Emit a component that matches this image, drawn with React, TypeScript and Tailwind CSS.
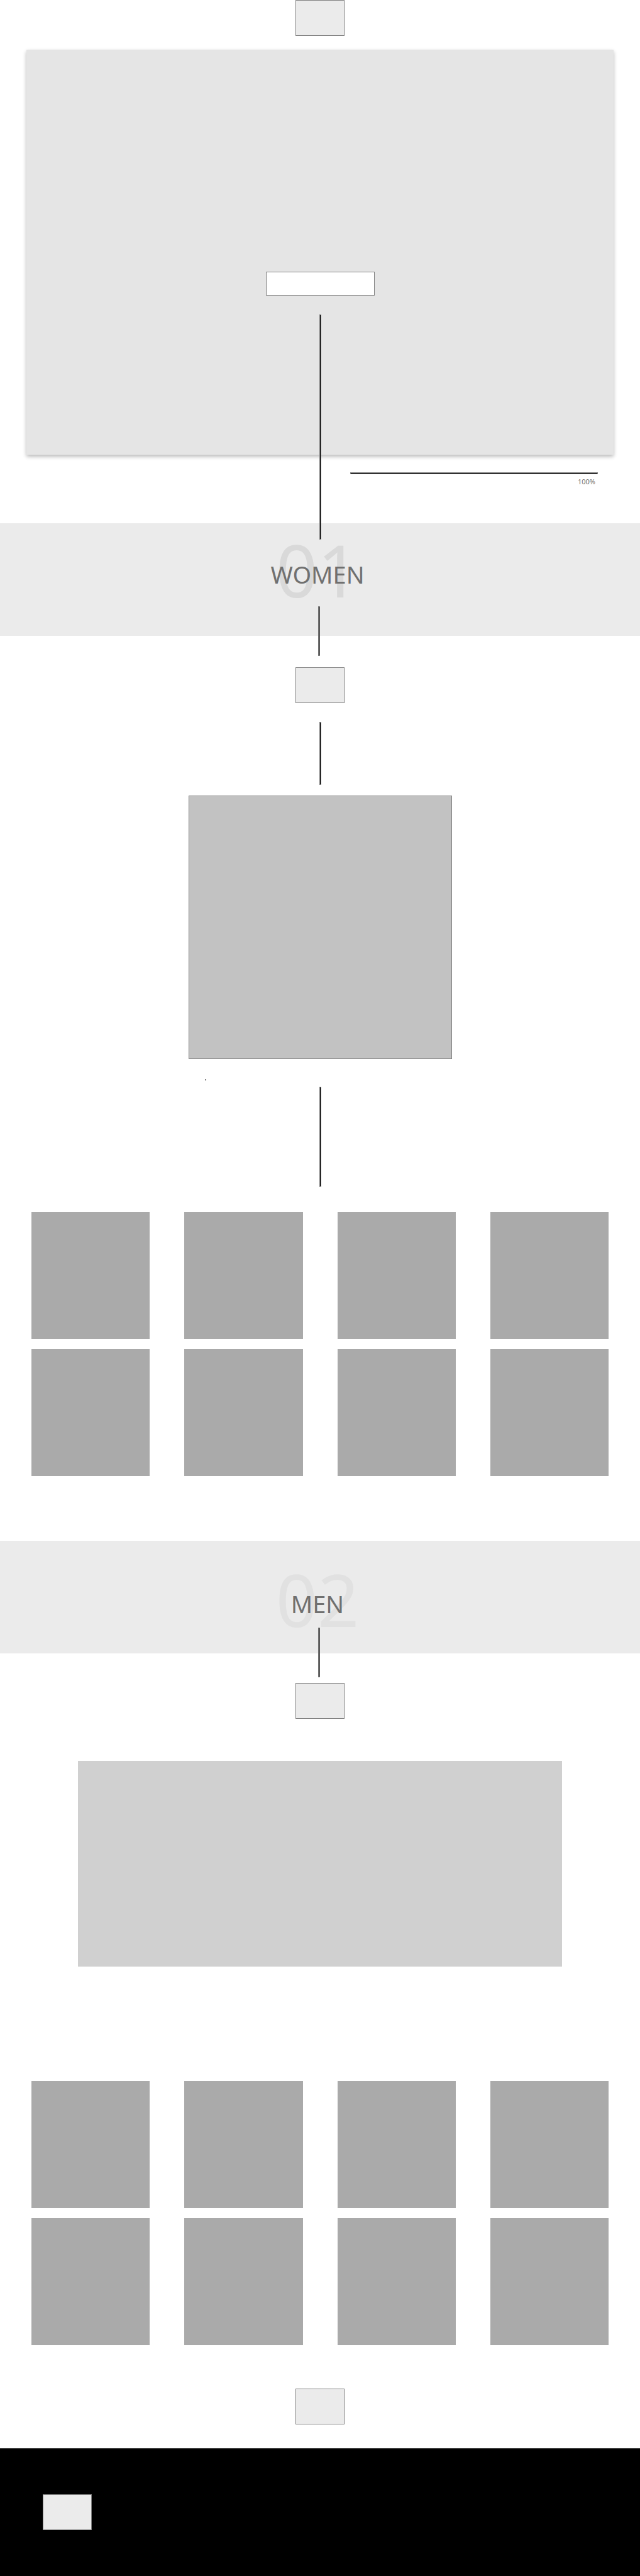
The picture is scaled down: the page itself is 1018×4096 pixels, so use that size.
import React from "react";

type BoxProps = { label: string };

function Logo({ label }: BoxProps) {
  return (
    <div
      role="img"
      aria-label={label}
      className="h-[57px] w-[78px] shrink-0 border border-[#808080] bg-[#ebebeb]"
    />
  );
}

function Connector({ className }: { className: string }) {
  return (
    <div
      aria-hidden="true"
      className={`relative z-10 w-[3px] shrink-0 border border-[#808080] bg-black ${className}`}
    />
  );
}

type BannerProps = {
  number: string;
  title: string;
  numberColor: string;
  padding: string;
  connector: string;
};

function Banner({ number, title, numberColor, padding, connector }: BannerProps) {
  return (
    <div className={`flex h-[179px] w-full flex-col items-center bg-[#ebebeb] pr-1 ${padding}`}>
      <div className="grid shrink-0 place-items-center pr-1">
        <span
          aria-hidden="true"
          className={`col-start-1 row-start-1 text-[116px] leading-none ${numberColor}`}
        >
          {number}
        </span>
        <h2 className="col-start-1 row-start-1 pt-4 text-[38px] leading-none text-[#707070]">
          {title}
        </h2>
      </div>
      <Connector className={`h-[79px] ${connector}`} />
    </div>
  );
}

function ProductGrid({ name }: { name: string }) {
  return (
    <ul className="grid w-full grid-cols-4 gap-x-[55px] gap-y-4 px-[50px]">
      {Array.from({ length: 8 }, (_, i) => (
        <li key={i} aria-label={`${name} ${i + 1}`} className="h-[202px] bg-[#aaaaaa]" />
      ))}
    </ul>
  );
}

export default function App() {
  return (
    <div className="w-full bg-white font-['Noto_Sans',sans-serif]">
      <header className="flex justify-center">
        <Logo label="Logo" />
      </header>

      <main>
        <section className="mx-[42px] mt-[22px] flex h-[644px] flex-col items-center bg-[#e5e5e5] pt-[353px] shadow-[0_3px_6px_rgba(0,0,0,0.28)]">
          <button
            type="button"
            aria-label="Shop now"
            className="h-[38px] w-[173px] shrink-0 border border-[#808080] bg-white"
          />
          <Connector className="mt-[30px] h-[358px]" />
        </section>

        <div className="mt-7 flex flex-col items-end pr-[67px]">
          <div className="h-[3px] w-[394px] border border-[#808080] bg-black" />
          <span className="mt-1 pr-1 text-[11px] leading-4 text-[#707070]">100%</span>
        </div>

        <section className="mt-[58px] flex flex-col items-center">
          <Banner
            number="01"
            title="WOMEN"
            numberColor="text-[#d9d9d9]"
            padding="pt-[15px]"
            connector="mt-px"
          />
          <div className="mt-[50px]">
            <Logo label="Women" />
          </div>
          <Connector className="mt-[30px] h-[100px]" />
          <div className="mt-[17px] flex w-full max-w-[419px] flex-col">
            <div className="aspect-square w-full border border-[#808080] bg-[#c2c2c2]" />
            <div className="mt-8 ml-[26px] size-0.5 bg-[#808080]" />
          </div>
          <Connector className="mt-2.5 mb-10 h-[159px]" />
          <ProductGrid name="Women item" />
        </section>

        <section className="mt-[103px] flex flex-col items-center">
          <Banner
            number="02"
            title="MEN"
            numberColor="text-[#e1e1e1]"
            padding="pt-[34px]"
            connector="-mt-3"
          />
          <div className="mt-[47px]">
            <Logo label="Men" />
          </div>
          <div className="mt-[67px] mb-[182px] w-full px-[124px]">
            <div className="h-[327px] bg-[#d0d0d0]" />
          </div>
          <ProductGrid name="Men item" />
        </section>

        <div className="mt-[69px] flex justify-center">
          <Logo label="Brand" />
        </div>
      </main>

      <footer className="mt-[38px] bg-black px-[68px] py-[73px]">
        <Logo label="Footer logo" />
      </footer>
    </div>
  );
}
